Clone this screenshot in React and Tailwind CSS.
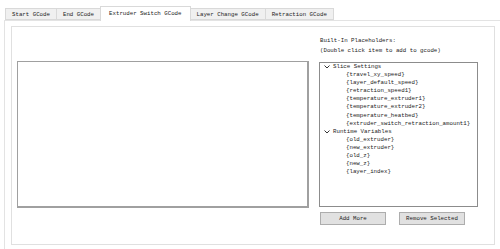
const tabs = ['Start GCode', 'End GCode', 'Extruder Switch GCode', 'Layer Change GCode', 'Retraction GCode']
const active = 2

const groups = [
  {
    name: 'Slice Settings',
    items: [
      '{travel_xy_speed}',
      '{layer_default_speed}',
      '{retraction_speed1}',
      '{temperature_extruder1}',
      '{temperature_extruder2}',
      '{temperature_heatbed}',
      '{extruder_switch_retraction_amount1}',
    ],
  },
  {
    name: 'Runtime Variables',
    items: ['{old_extruder}', '{new_extruder}', '{old_z}', '{new_z}', '{layer_index}'],
  },
]

function Chevron() {
  return (
    <svg width="6" height="4" viewBox="0 0 6 4" className="mr-[3px]">
      <path d="M0.5 0.5 L3 3 L5.5 0.5" fill="none" stroke="#333" strokeWidth="1" />
    </svg>
  )
}

export default function App() {
  return (
    <div
      className="w-[500px] h-[249px] bg-white overflow-hidden pl-[4px] pt-[6px] flex flex-col text-[#222]"
      style={{ fontFamily: '"Liberation Mono", "DejaVu Sans Mono", monospace' }}
    >
      <div className="flex items-end h-[14px] pl-[1px] relative z-10 text-[5.75px]">
        {tabs.map((t, i) =>
          i === active ? (
            <div
              key={t}
              className="h-[15px] -mb-[1px] -ml-[1px] px-[8px] bg-white border border-b-0 border-[#d9d9d9] leading-[14px]"
            >
              {t}
            </div>
          ) : (
            <div
              key={t}
              className="h-[12px] px-[6px] bg-[#f0f0f0] border border-[#d9d9d9] -ml-[1px] first:ml-0 leading-[11px]"
            >
              {t}
            </div>
          )
        )}
      </div>
      <div className="flex-1 border-l border-t border-[#e3e3e3] pl-[6px] pt-[5px]">
        <div className="w-[484px] h-[219px] border border-[#e0e0e0] flex pl-[5px]">
          <div className="mt-[34px] w-[292px] h-[147px] border border-[#a0a0a0] border-r-2 border-b-2 bg-white" />
          <div className="ml-[10px] pt-[9px] w-[159px] flex flex-col text-[5.75px]">
            <div className="leading-[10px] pl-[1px]">Built-In Placeholders:</div>
            <div className="leading-[10px] pl-[1px]">(Double click item to add to gcode)</div>
            <div className="mt-[6px] h-[145px] border border-[#8c8c8c] bg-white pl-[4px] pt-[0px]">
              {groups.map((g) => (
                <div key={g.name}>
                  <div className="flex items-center h-[8.1px]">
                    <Chevron />
                    <span className="leading-[8.1px]">{g.name}</span>
                  </div>
                  {g.items.map((it) => (
                    <div key={it} className="h-[8.1px] leading-[8.1px] pl-[22px] whitespace-nowrap">
                      {it}
                    </div>
                  ))}
                </div>
              ))}
            </div>
            <div className="flex mt-[5px] pl-[1px] gap-[13px]">
              <button className="w-[66px] h-[13px] bg-[#e1e1e1] border border-[#adadad] text-[5.75px] leading-[11px] text-[#222]">
                Add More
              </button>
              <button className="w-[66px] h-[13px] bg-[#e1e1e1] border border-[#adadad] text-[5.75px] leading-[11px] text-[#222]">
                Remove Selected
              </button>
            </div>
          </div>
        </div>
      </div>
    </div>
  )
}
